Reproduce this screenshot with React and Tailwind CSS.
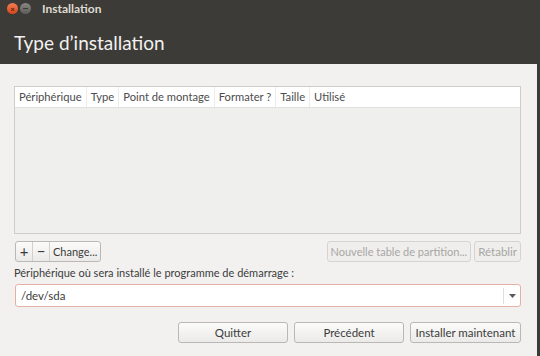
const font = { fontFamily: 'Lato, "Noto Sans", sans-serif' };

// GTK-ish push button
function Button({ children, disabled, className = '' }) {
  return (
    <button
      type="button"
      disabled={disabled}
      className={`h-[21px] rounded-[3px] border text-[11.5px] leading-none px-1 whitespace-nowrap ${
        disabled
          ? 'border-[#d6d4d2] bg-[#efeeed] text-[#a8a6a3]'
          : 'border-[#bab8b5] bg-gradient-to-b from-[#fbfbfa] to-[#ebeae8] text-[#3c3c3c]'
      } ${className}`}
    >
      {children}
    </button>
  );
}

const columns = ['Périphérique', 'Type', 'Point de montage', 'Formater ?', 'Taille', 'Utilisé'];

export default function App() {
  return (
    <div className="w-[540px] h-[356px] flex flex-col bg-[#3c3b37] overflow-hidden" style={font}>
      {/* title bar */}
      <div className="h-[17px] flex items-center pl-[7px] gap-[2px] shrink-0">
        <span className="w-[11px] h-[11px] rounded-full bg-gradient-to-b from-[#f37e52] to-[#d9451a] flex items-center justify-center text-[8px] leading-none text-[#5a1e0a] font-bold">×</span>
        <span className="w-[11px] h-[11px] rounded-full bg-gradient-to-b from-[#8a8984] to-[#5c5b57] flex items-center justify-center">
          <span className="w-[5px] h-[1px] bg-[#3c3b37]" />
        </span>
        <span className="ml-[9px] text-[12px] font-bold text-[#dfdbd2] leading-none">Installation</span>
      </div>

      {/* header */}
      <div className="h-[47px] shrink-0 flex items-center pl-[14px] pt-[3px]">
        <span className="text-[19px] text-[#f2f1f0] leading-none">Type d’installation</span>
      </div>

      {/* body */}
      <div className="flex-1 flex bg-[#3c3b37]">
        <div className="flex-1 bg-[#f2f1f0] flex flex-col pl-[14px] pr-[16px] pt-[22px] mr-[3px]">
          {/* partition table */}
          <div className="h-[148px] border border-[#cfcdca] bg-[#efefee] flex flex-col">
            <div className="h-[21px] bg-white border-b border-[#e2e0de] flex items-center text-[11.2px] text-[#4c4c4c]">
              {columns.map((c, i) => (
                <span
                  key={c}
                  className={`h-full flex items-center px-[4px] ${
                    i < columns.length - 1 ? 'border-r border-[#ececea]' : ''
                  }`}
                >
                  {c}
                </span>
              ))}
            </div>
          </div>

          {/* table actions */}
          <div className="flex items-center mt-[7px] h-[21px]">
            <div className="flex h-[21px] rounded-[3px] border border-[#bab8b5] bg-gradient-to-b from-[#fbfbfa] to-[#ebeae8] text-[11px] text-[#3c3c3c] overflow-hidden ml-[1px]">
              <span className="w-[17px] flex items-center justify-center border-r border-[#d2d0cd] text-[15px] leading-none">+</span>
              <span className="w-[17px] flex items-center justify-center border-r border-[#d2d0cd] text-[15px] leading-none">−</span>
              <span className="px-[3px] flex items-center leading-none">Change...</span>
            </div>
            <div className="flex-1" />
            <Button disabled className="px-[3px] text-[11px]">Nouvelle table de partition...</Button>
            <Button disabled className="ml-[3px] px-[3px]">Rétablir</Button>
          </div>

          <div className="mt-[3px] text-[11px] text-[#3c3c3c] leading-[16px]">
            Périphérique où sera installé le programme de démarrage :
          </div>

          {/* boot device combo */}
          <div className="mt-[3px] h-[23px] ml-[1px] rounded-[3px] border border-[#e3b2a4] bg-white flex items-center text-[11.5px] text-[#3c3c3c]">
            <span className="flex-1 pl-[5px]">/dev/sda</span>
            <span className="w-[17px] h-[16px] border-l border-[#e0dedb] flex items-center justify-center">
              <svg width="7" height="4" viewBox="0 0 7 4"><path d="M0 0h7L3.5 4z" fill="#5a5a5a" /></svg>
            </span>
          </div>

          {/* wizard buttons */}
          <div className="mt-[15px] flex justify-end gap-[6px]">
            <Button className="w-[110px]">Quitter</Button>
            <Button className="w-[110px]">Précédent</Button>
            <Button className="w-[111px]">Installer maintenant</Button>
          </div>
        </div>
      </div>
    </div>
  );
}
